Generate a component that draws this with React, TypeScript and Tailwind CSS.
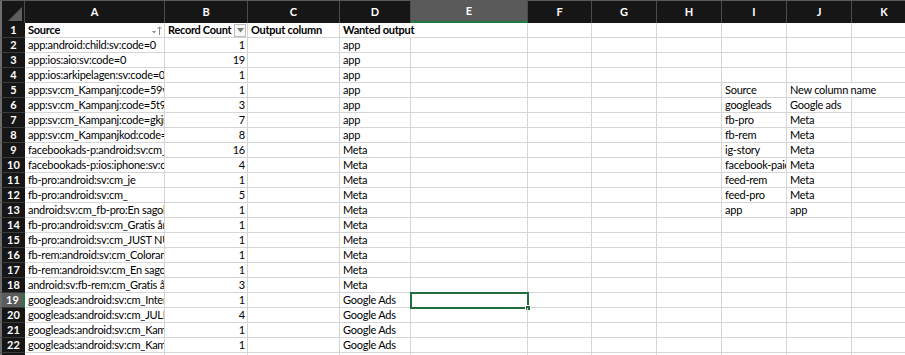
import type { ReactNode } from "react";

const COLS = [
  { key: "A", w: 140 },
  { key: "B", w: 83 },
  { key: "C", w: 92 },
  { key: "D", w: 71 },
  { key: "E", w: 117 },
  { key: "F", w: 64 },
  { key: "G", w: 65 },
  { key: "H", w: 65 },
  { key: "I", w: 65 },
  { key: "J", w: 65 },
  { key: "K", w: 65 },
];

type Row = { a: string; b: number; d: string; i?: string; j?: string };

const rows: Row[] = [
  { a: "app:android:child:sv:code=0", b: 1, d: "app" },
  { a: "app:ios:aio:sv:code=0", b: 19, d: "app" },
  { a: "app:ios:arkipelagen:sv:code=0", b: 1, d: "app" },
  { a: "app:sv:cm_Kampanj:code=59vx", b: 1, d: "app", i: "Source", j: "New column name" },
  { a: "app:sv:cm_Kampanj:code=5t9k", b: 3, d: "app", i: "googleads", j: "Google ads" },
  { a: "app:sv:cm_Kampanj:code=gkjrs", b: 7, d: "app", i: "fb-pro", j: "Meta" },
  { a: "app:sv:cm_Kampanjkod:code=x", b: 8, d: "app", i: "fb-rem", j: "Meta" },
  { a: "facebookads-p:android:sv:cm_J", b: 16, d: "Meta", i: "ig-story", j: "Meta" },
  { a: "facebookads-p:ios:iphone:sv:cm", b: 4, d: "Meta", i: "facebook-paid", j: "Meta" },
  { a: "fb-pro:android:sv:cm_je", b: 1, d: "Meta", i: "feed-rem", j: "Meta" },
  { a: "fb-pro:android:sv:cm_", b: 5, d: "Meta", i: "feed-pro", j: "Meta" },
  { a: "android:sv:cm_fb-pro:En sagolik", b: 1, d: "Meta", i: "app", j: "app" },
  { a: "fb-pro:android:sv:cm_Gratis år", b: 1, d: "Meta" },
  { a: "fb-pro:android:sv:cm_JUST NU", b: 1, d: "Meta" },
  { a: "fb-rem:android:sv:cm_Colorama", b: 1, d: "Meta" },
  { a: "fb-rem:android:sv:cm_En sagolik", b: 1, d: "Meta" },
  { a: "android:sv:fb-rem:cm_Gratis år", b: 3, d: "Meta" },
  { a: "googleads:android:sv:cm_Interv", b: 1, d: "Google Ads" },
  { a: "googleads:android:sv:cm_JULI", b: 4, d: "Google Ads" },
  { a: "googleads:android:sv:cm_Kamp", b: 1, d: "Google Ads" },
  { a: "googleads:android:sv:cm_Kamp", b: 1, d: "Google Ads" },
  { a: "", b: 0, d: "" },
];

function Cell({
  w,
  children,
  right,
  bold,
  noRight,
  clip = true,
}: {
  w: number;
  children?: ReactNode;
  right?: boolean;
  bold?: boolean;
  noRight?: boolean;
  clip?: boolean;
}) {
  return (
    <div
      className={`h-[15px] shrink-0 border-b border-[#d6d6d6] px-[3px] text-[11px] leading-[14px] tracking-[-0.25px] whitespace-nowrap ${
        noRight ? "" : "border-r"
      } ${clip ? "overflow-hidden" : "overflow-visible"} ${right ? "text-right pr-[2px]" : ""} ${
        bold ? "font-bold" : ""
      }`}
      style={{ width: w }}
    >
      {children}
    </div>
  );
}

function RowHeader({ n, active }: { n: number; active?: boolean }) {
  return (
    <div
      className={`h-[15px] w-[25px] shrink-0 border-l-2 border-b border-l-[#6d6d6d] border-b-[#3a3a3a] text-center text-[11px] font-bold leading-[14px] text-white ${
        active ? "bg-[#5c5c5c] border-r-2 border-r-[#1f7a45]" : "bg-[#161616]"
      }`}
    >
      {n}
    </div>
  );
}

function SortButton() {
  return (
    <svg width="12" height="11" viewBox="0 0 12 11" className="shrink-0">
      <path d="M1 6h4l-2 2.5z" fill="#8a8a8a" />
      <path d="M8.5 10V2M6.5 4l2-2.2 2 2.2" stroke="#8a8a8a" strokeWidth="1" fill="none" />
    </svg>
  );
}

function FilterButton() {
  return (
    <div className="flex h-[13px] w-[12px] shrink-0 items-center justify-center border border-[#bdbdbd] bg-[#f7f7f7]">
      <svg width="7" height="5" viewBox="0 0 7 5">
        <path d="M0 0h7L3.5 4.5z" fill="#7d7d7d" />
      </svg>
    </div>
  );
}

export default function App() {
  return (
    <div className="h-[355px] w-[905px] overflow-hidden bg-white text-black" style={{ fontFamily: "Lato, 'Open Sans', sans-serif" }}>
      {/* column letters */}
      <div className="flex h-[23px] border-t border-[#5a5a5a] bg-[#161616]">
        <div className="relative h-[22px] w-[25px] shrink-0 border-l-2 border-r border-l-[#6d6d6d] border-r-[#4a4a4a]">
          <svg width="16" height="16" viewBox="0 0 16 16" className="absolute bottom-[1px] right-[1px]">
            <path d="M1 15L15 15L15 1Z" fill="#5e5e5e" />
          </svg>
        </div>
        {COLS.map((c) => (
          <div
            key={c.key}
            className={`flex h-[22px] shrink-0 items-center justify-center border-r border-[#4a4a4a] text-[11px] font-bold text-white ${
              c.key === "E" ? "bg-[#5a5a5a] border-b-2 border-b-[#1f7a45]" : ""
            }`}
            style={{ width: c.w }}
          >
            {c.key}
          </div>
        ))}
      </div>

      {/* row 1 */}
      <div className="flex">
        <RowHeader n={1} />
        <div className="flex h-[15px] w-[140px] shrink-0 items-center justify-between border-b border-r border-[#d6d6d6] pl-[3px] pr-[1px] text-[11px] font-bold tracking-[-0.25px]">
          <span>Source</span>
          <SortButton />
        </div>
        <div className="flex h-[15px] w-[83px] shrink-0 items-center justify-between border-b border-r border-[#d6d6d6] pl-[3px] pr-[1px] text-[11px] font-bold tracking-[-0.3px]">
          <span className="whitespace-nowrap">Record Count</span>
          <FilterButton />
        </div>
        <Cell w={92} bold>Output column</Cell>
        <Cell w={71} bold noRight clip={false}>Wanted output</Cell>
        <Cell w={117} />
        <Cell w={64} />
        <Cell w={65} />
        <Cell w={65} />
        <Cell w={65} />
        <Cell w={65} />
        <Cell w={65} />
      </div>

      {rows.map((r, idx) => {
        const n = idx + 2;
        const isSource = r.j === "New column name";
        return (
          <div key={n} className="flex">
            <RowHeader n={n} active={n === 19} />
            <Cell w={140}>{r.a}</Cell>
            <Cell w={83} right>{r.b ? r.b : ""}</Cell>
            <Cell w={92} />
            <Cell w={71}>{r.d}</Cell>
            <div className="relative h-[15px] w-[117px] shrink-0 border-b border-r border-[#d6d6d6]">
              {n === 19 && (
                <div className="absolute -left-[1px] -top-[1px] h-[17px] w-[119px] border-2 border-[#1e6e3e]">
                  <div className="absolute -bottom-[4px] -right-[4px] h-[6px] w-[6px] border border-white bg-[#1e6e3e]" />
                </div>
              )}
            </div>
            <Cell w={64} />
            <Cell w={65} />
            <Cell w={65} />
            <Cell w={65}>{r.i}</Cell>
            <Cell w={65} noRight={isSource} clip={!isSource}>{r.j}</Cell>
            <Cell w={65} />
          </div>
        );
      })}
    </div>
  );
}
